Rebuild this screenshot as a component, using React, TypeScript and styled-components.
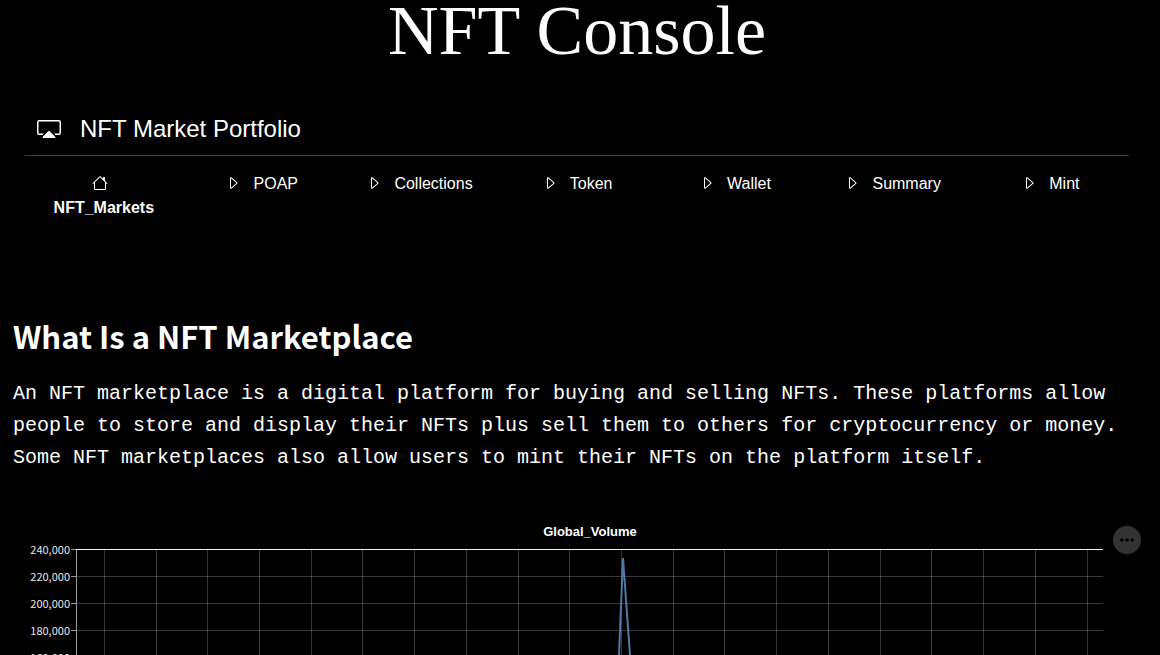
import React from "react";
import styled, { createGlobalStyle } from "styled-components";
import { BsCaretRight, BsCast, BsHouse } from "react-icons/bs";

const GlobalStyle = createGlobalStyle`
  * { box-sizing: border-box; }
  body { margin: 0; background: #000; color: #fff; }
`;

const Page = styled.main`
  height: 100vh;
  overflow: hidden;
  padding: 0 19px 0 13px;
  background: #000;
`;

const PageTitle = styled.h1`
  margin: 0 0 32px;
  font: 400 70px/62px "Liberation Serif", "Times New Roman", serif;
  text-align: center;
`;

const Menu = styled.section`
  padding: 0 12px;
  font-family: "Liberation Sans", Arial, sans-serif;
`;

const MenuTitle = styled.h2`
  display: flex;
  align-items: center;
  gap: 19px;
  margin: 0;
  padding: 17px 12px 8px;
  border-bottom: 1px solid #404040;
  font-size: 24px;
  font-weight: 400;
  line-height: 36px;
`;

const TabList = styled.ul`
  display: flex;
  margin: 0;
  padding: 8px 0 0;
  list-style: none;
`;

const TabItem = styled.li`
  flex: 1 1 0;
  min-width: 0;
`;

const TabLink = styled.a<{ $active?: boolean }>`
  display: block;
  padding: 8px 16px;
  color: #fff;
  font-size: 16px;
  font-weight: ${(p) => (p.$active ? 700 : 400)};
  line-height: 24px;
  text-align: center;
  text-decoration: none;

  svg {
    margin-right: 8px;
    vertical-align: -2px;
  }
`;

const Article = styled.section`
  padding-top: 88px;
`;

const Heading = styled.h2`
  margin: 0;
  font: 600 31px/40px "Noto Sans CJK SC", sans-serif;
`;

const Body = styled.p`
  margin: 22px 0 0;
  font: 400 20px/32px "Liberation Mono", "Courier New", monospace;
`;

const ChartFrame = styled.figure`
  position: relative;
  margin: 47px 0 0;
`;

const ChartDrawing = styled.svg`
  display: block;
  width: 100%;
`;

const ChartTitle = styled.text`
  fill: #fff;
  font: 700 13px "Liberation Sans", Arial, sans-serif;
  text-anchor: middle;
`;

const AxisLabel = styled.text`
  fill: #e6e6e6;
  font: 400 11px "Noto Sans CJK SC", sans-serif;
  text-anchor: end;
`;

const ChartMenuButton = styled.button`
  position: absolute;
  top: 5px;
  right: 0;
  display: grid;
  place-items: center;
  width: 28px;
  height: 28px;
  padding: 0;
  border: 0;
  border-radius: 50%;
  background: #333;
  cursor: pointer;
`;

const tabs = ["NFT_Markets", "POAP", "Collections", "Token", "Wallet", "Summary", "Mint"];

const plot = { left: 63, right: 1090, top: 28, bottom: 352, rowStep: 27 };
const volumeTicks = Array.from({ length: 13 }, (_, i) => 240000 - i * 20000);
const dateTicks = [91, 143, 194, 246, 298, 349, 401, 453, 505, 556, 608, 660, 711, 763, 815, 867, 918, 970, 1022, 1074];

function VolumeChart() {
  return (
    <ChartFrame>
      <ChartDrawing viewBox="0 0 1128 380" role="img" aria-label="Global_Volume">
        <ChartTitle x="577" y="15">Global_Volume</ChartTitle>
        <g stroke="#fff" strokeOpacity="0.22">
          {dateTicks.map((x) => (
            <line key={x} x1={x + 0.5} x2={x + 0.5} y1={plot.top} y2={plot.bottom} />
          ))}
          {volumeTicks.map((v, i) => {
            const y = plot.top + i * plot.rowStep + 0.5;
            return <line key={v} x1={plot.left} x2={plot.right} y1={y} y2={y} />;
          })}
        </g>
        <path
          d="M63 351 L560 349 L598 330 L606 134 L610 37 L617 134 L630 330 L680 349 L1090 350"
          fill="none"
          stroke="#5276a7"
          strokeWidth="2"
        />
        <path d={`M${plot.left + 0.5} ${plot.top}V${plot.bottom}`} stroke="#999" />
        <path d={`M${plot.left} ${plot.top + 0.5}H${plot.right}`} stroke="#f4f4f4" />
        {volumeTicks.map((v, i) => {
          const y = plot.top + i * plot.rowStep;
          return (
            <g key={v}>
              <line x1={plot.left - 5} x2={plot.left} y1={y + 0.5} y2={y + 0.5} stroke="#999" />
              <AxisLabel x={plot.left - 6} y={y + 5}>{v.toLocaleString("en-US")}</AxisLabel>
            </g>
          );
        })}
      </ChartDrawing>
      <ChartMenuButton aria-label="Chart actions">
        <svg width="14" height="14" viewBox="0 0 14 14" fill="#000">
          <circle cx="1.8" cy="7" r="1.8" />
          <circle cx="7" cy="7" r="1.8" />
          <circle cx="12.2" cy="7" r="1.8" />
        </svg>
      </ChartMenuButton>
    </ChartFrame>
  );
}

export default function App() {
  return (
    <>
      <GlobalStyle />
      <Page>
        <PageTitle>NFT Console</PageTitle>
        <Menu>
          <MenuTitle>
            <BsCast size={24} />
            NFT Market Portfolio
          </MenuTitle>
          <nav>
            <TabList>
              {tabs.map((name, i) => (
                <TabItem key={name}>
                  <TabLink href="#" $active={i === 0}>
                    {i === 0 ? <BsHouse size={16} /> : <BsCaretRight size={16} />} {name}
                  </TabLink>
                </TabItem>
              ))}
            </TabList>
          </nav>
        </Menu>
        <Article>
          <Heading>What Is a NFT Marketplace</Heading>
          <Body>
            An NFT marketplace is a digital platform for buying and selling NFTs. These platforms allow
            people to store and display their NFTs plus sell them to others for cryptocurrency or money.
            Some NFT marketplaces also allow users to mint their NFTs on the platform itself.
          </Body>
          <VolumeChart />
        </Article>
      </Page>
    </>
  );
}
